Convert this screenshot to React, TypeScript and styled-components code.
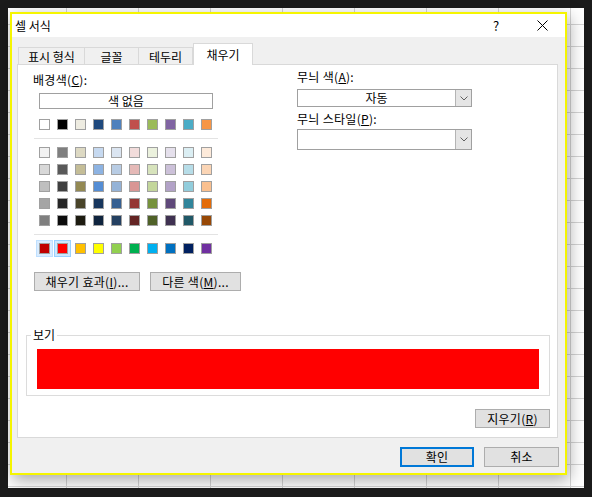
import React from "react";
import styled, { createGlobalStyle } from "styled-components";

const GlobalStyle = createGlobalStyle`
  html, body {
    margin: 0;
    padding: 0;
    background: #1b1b1b;
  }
  body {
    font-family: "Noto Sans CJK KR", "Noto Sans", sans-serif;
    font-size: 12px;
    line-height: 16px;
    color: #000;
  }
  * {
    box-sizing: border-box;
  }
`;

const themeRow = ["#ffffff", "#000000", "#eeece1", "#1f497d", "#4f81bd", "#c0504d", "#9bbb59", "#8064a2", "#4bacc6", "#f79646"];

const tintRows = [
  ["#f2f2f2", "#7f7f7f", "#ddd9c3", "#c6d9f0", "#dbe5f1", "#f2dcdb", "#ebf1dd", "#e5e0ec", "#dbeef3", "#fdeada"],
  ["#d8d8d8", "#595959", "#c4bd97", "#8db3e2", "#b8cce4", "#e5b9b7", "#d7e3bc", "#ccc1d9", "#b7dde8", "#fbd5b5"],
  ["#bfbfbf", "#3f3f3f", "#938953", "#548dd4", "#95b3d7", "#d99694", "#c3d69b", "#b2a2c7", "#92cddc", "#fac08f"],
  ["#a5a5a5", "#262626", "#494429", "#17365d", "#366092", "#953734", "#76923c", "#5f497a", "#31859b", "#e36c09"],
  ["#7f7f7f", "#0c0c0c", "#1d1b10", "#0f243e", "#244061", "#632423", "#4f6128", "#3f3151", "#205867", "#974806"],
];

const standardRow = ["#c00000", "#ff0000", "#ffc000", "#ffff00", "#92d050", "#00b050", "#00b0f0", "#0070c0", "#002060", "#7030a0"];

const Sheet = styled.div`
  margin: 8px 0 0 8px;
  width: 576px;
  height: 480px;
  padding: 4px 0 0 2px;
  background-color: #fff;
  background-image:
    linear-gradient(to right, #d4d4d4 1px, transparent 1px),
    linear-gradient(to bottom, #d4d4d4 1px, transparent 1px);
  background-size: 72px 100%, 100% 22px;
  background-position: 58px 0, 0 16px;
`;

const Window = styled.div`
  width: 557px;
  border: 2px solid #f5f500;
  background: #f0f0f0;
  box-shadow: 2px 5px 16px rgba(0, 0, 0, 0.35);
  display: flex;
  flex-direction: column;
`;

const TitleBar = styled.div`
  height: 23px;
  background: #fff;
  display: flex;
  align-items: center;
`;

const Title = styled.div`
  flex: 1;
  padding-left: 3px;
`;

const TitleButton = styled.div`
  width: 46px;
  height: 23px;
  display: flex;
  align-items: center;
  justify-content: center;
  font-size: 13px;
`;

const Body = styled.div`
  padding: 6px 7px 6px 5px;
  display: flex;
  flex-direction: column;
`;

const TabStrip = styled.div`
  display: flex;
  align-items: flex-end;
  padding-left: 1px;
`;

const Tab = styled.div<{ $w: number; $active?: boolean }>`
  width: ${(p) => p.$w}px;
  height: ${(p) => (p.$active ? 22 : 17)}px;
  margin-bottom: ${(p) => (p.$active ? -1 : 0)}px;
  margin-left: ${(p) => (p.$active ? 0 : -1)}px;
  position: relative;
  z-index: ${(p) => (p.$active ? 2 : 1)};
  background: ${(p) => (p.$active ? "#fff" : "#f0f0f0")};
  border: 1px solid #d9d9d9;
  border-bottom: none;
  display: flex;
  align-items: center;
  justify-content: center;
  padding-top: ${(p) => (p.$active ? 0 : 1)}px;
  &:first-child {
    margin-left: 0;
  }
`;

const Panel = styled.div`
  background: #fff;
  border: 1px solid #d9d9d9;
  display: flex;
  flex-direction: column;
  padding-bottom: 9px;
`;

const TopArea = styled.div`
  display: flex;
  padding-left: 15px;
`;

const LeftCol = styled.div`
  width: 208px;
  padding-top: 7px;
  display: flex;
  flex-direction: column;
`;

const RightCol = styled.div`
  width: 175px;
  margin-left: 56px;
  padding-top: 4px;
  display: flex;
  flex-direction: column;
`;

const FieldLabel = styled.div<{ $mt?: number }>`
  margin-top: ${(p) => p.$mt ?? 0}px;
  height: 16px;
  white-space: nowrap;
  letter-spacing: 0.3px;
`;

const NoColorBox = styled.div`
  margin: 5px 0 0 6px;
  width: 174px;
  height: 16px;
  border: 1px solid #a0a0a0;
  text-align: center;
  line-height: 14px;
`;

const SwatchRow = styled.div<{ $mt?: number }>`
  display: flex;
  gap: 7px;
  margin-top: ${(p) => p.$mt ?? 0}px;
  margin-left: 6px;
`;

const SwatchGrid = styled.div`
  display: flex;
  flex-direction: column;
  gap: 6px;
  margin-top: 8px;
`;

const Swatch = styled.div<{ $color: string; $state?: "hover" | "selected" }>`
  width: 11px;
  height: 11px;
  border: 1px solid #a0a0a0;
  background: ${(p) => p.$color};
  box-shadow: ${(p) =>
    p.$state === "selected"
      ? "0 0 0 2px #cce8ff, 0 0 0 3px #99d1ff"
      : p.$state === "hover"
      ? "0 0 0 2px #d9ecff, 0 0 0 3px #bfe0ff"
      : "none"};
`;

const Divider = styled.div`
  margin: 8px 0 0 1px;
  width: 184px;
  height: 1px;
  background: #e3e3e3;
`;

const ActionRow = styled.div`
  display: flex;
  gap: 10px;
  margin: 18px 0 0 1px;
`;

const Button = styled.div<{ $w: number; $h?: number }>`
  width: ${(p) => p.$w}px;
  height: ${(p) => p.$h ?? 19}px;
  background: #e1e1e1;
  border: 1px solid #adadad;
  display: flex;
  align-items: center;
  justify-content: center;
  white-space: nowrap;
  letter-spacing: 0.3px;
`;

const DialogButton = styled(Button)<{ $primary?: boolean }>`
  border: ${(p) => (p.$primary ? "2px solid #0078d7" : "1px solid #adadad")};
`;

const SelectBox = styled.div<{ $h: number; $mt: number }>`
  margin-top: ${(p) => p.$mt}px;
  height: ${(p) => p.$h}px;
  border: 1px solid #a0a0a0;
  background: #fff;
  display: flex;
`;

const SelectValue = styled.div`
  flex: 1;
  display: flex;
  align-items: center;
  justify-content: center;
`;

const SelectArrow = styled.div`
  width: 16px;
  background: #e5e5e5;
  border-left: 1px solid #b4b4b4;
  display: flex;
  align-items: center;
  justify-content: center;
`;

const PreviewSet = styled.fieldset`
  margin: 36px 7px 0 8px;
  padding: 0 10px 6px 4px;
  border: 1px solid #dcdcdc;
  min-width: 0;
`;

const PreviewLegend = styled.legend`
  padding: 0 2px;
  line-height: 16px;
`;

const PreviewFill = styled.div<{ $color: string }>`
  margin: 6px 0 0 6px;
  height: 40px;
  background: ${(p) => p.$color};
`;

const ClearRow = styled.div`
  display: flex;
  justify-content: flex-end;
  margin-top: 13px;
  padding-right: 7px;
`;

const Footer = styled.div`
  display: flex;
  justify-content: flex-end;
  gap: 10px;
  margin: 9px -1px 0 0;
`;

const Chevron = () => (
  <svg width="8" height="5" viewBox="0 0 8 5">
    <polyline points="0.5,0.5 4,4 7.5,0.5" fill="none" stroke="#606060" strokeWidth="1" />
  </svg>
);

const CloseIcon = () => (
  <svg width="11" height="11" viewBox="0 0 11 11">
    <path d="M0.5 0.5 L10.5 10.5 M10.5 0.5 L0.5 10.5" stroke="#000" strokeWidth="1" />
  </svg>
);

export default function App() {
  return (
    <>
      <GlobalStyle />
      <Sheet>
        <Window>
          <TitleBar>
            <Title>셀 서식</Title>
            <TitleButton>?</TitleButton>
            <TitleButton>
              <CloseIcon />
            </TitleButton>
          </TitleBar>
          <Body>
            <TabStrip>
              <Tab $w={67}>표시 형식</Tab>
              <Tab $w={55}>글꼴</Tab>
              <Tab $w={55}>테두리</Tab>
              <Tab $w={60} $active>채우기</Tab>
            </TabStrip>
            <Panel>
              <TopArea>
                <LeftCol>
                  <FieldLabel>
                    배경색(<u>C</u>):
                  </FieldLabel>
                  <NoColorBox>색 없음</NoColorBox>
                  <SwatchRow $mt={10}>
                    {themeRow.map((c, i) => (
                      <Swatch key={i} $color={c} />
                    ))}
                  </SwatchRow>
                  <Divider />
                  <SwatchGrid>
                    {tintRows.map((row, r) => (
                      <SwatchRow key={r}>
                        {row.map((c, i) => (
                          <Swatch key={i} $color={c} />
                        ))}
                      </SwatchRow>
                    ))}
                  </SwatchGrid>
                  <Divider />
                  <SwatchRow $mt={8}>
                    {standardRow.map((c, i) => (
                      <Swatch key={i} $color={c} $state={i === 0 ? "hover" : i === 1 ? "selected" : undefined} />
                    ))}
                  </SwatchRow>
                  <ActionRow>
                    <Button $w={106}>
                      채우기 효과(<u>I</u>)...
                    </Button>
                    <Button $w={91}>
                      다른 색(<u>M</u>)...
                    </Button>
                  </ActionRow>
                </LeftCol>
                <RightCol>
                  <FieldLabel>
                    무늬 색(<u>A</u>):
                  </FieldLabel>
                  <SelectBox $h={18} $mt={4}>
                    <SelectValue>자동</SelectValue>
                    <SelectArrow>
                      <Chevron />
                    </SelectArrow>
                  </SelectBox>
                  <FieldLabel $mt={4}>
                    무늬 스타일(<u>P</u>):
                  </FieldLabel>
                  <SelectBox $h={21} $mt={2}>
                    <SelectValue />
                    <SelectArrow>
                      <Chevron />
                    </SelectArrow>
                  </SelectBox>
                </RightCol>
              </TopArea>
              <PreviewSet>
                <PreviewLegend>보기</PreviewLegend>
                <PreviewFill $color="#ff0000" />
              </PreviewSet>
              <ClearRow>
                <Button $w={75}>
                  지우기(<u>R</u>)
                </Button>
              </ClearRow>
            </Panel>
            <Footer>
              <DialogButton $w={74} $h={20} $primary>
                확인
              </DialogButton>
              <DialogButton $w={75} $h={20}>
                취소
              </DialogButton>
            </Footer>
          </Body>
        </Window>
      </Sheet>
    </>
  );
}
